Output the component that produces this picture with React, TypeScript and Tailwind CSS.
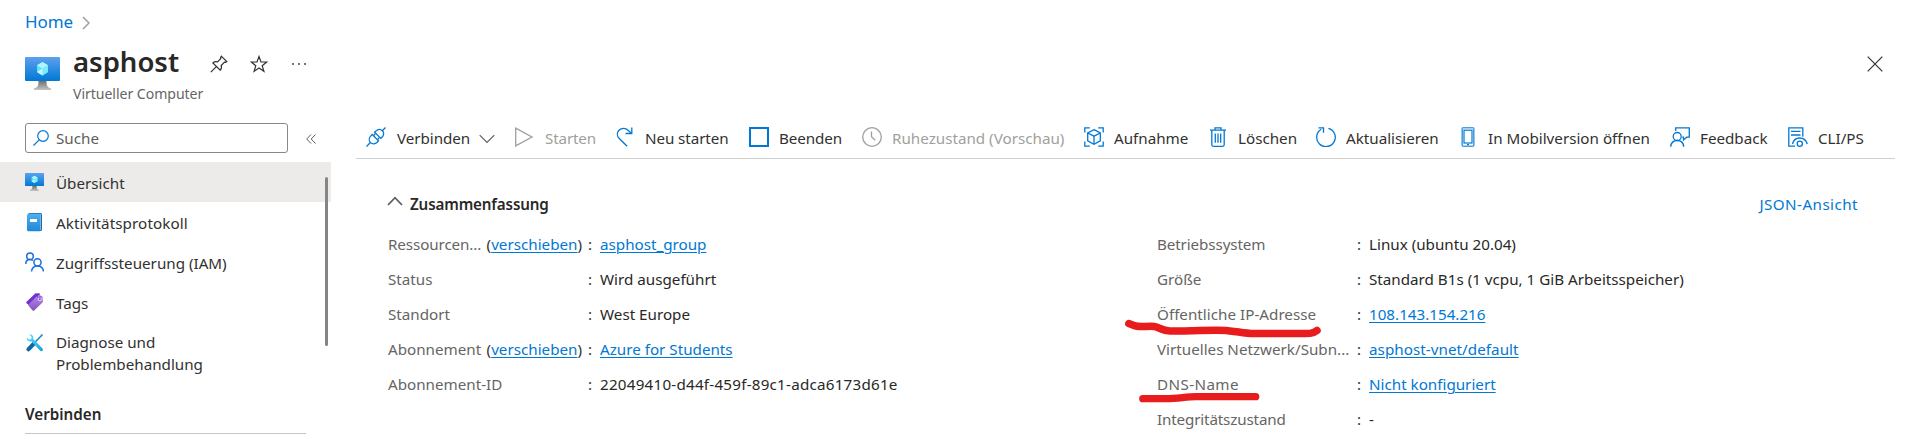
import React from "react";

type IconProps = { className?: string };

function VmIcon({ className }: IconProps) {
  return (
    <svg viewBox="0 0 35 33" className={className} fill="none">
      <defs>
        <linearGradient id="vm-screen" x1="0" y1="0" x2="0" y2="1">
          <stop offset="0" stopColor="#5ea0ef" />
          <stop offset="1" stopColor="#0078d4" />
        </linearGradient>
        <linearGradient id="vm-stand" x1="0" y1="0" x2="0" y2="1">
          <stop offset="0" stopColor="#707070" />
          <stop offset="1" stopColor="#c4c4c4" />
        </linearGradient>
      </defs>
      <path d="M13.5 24h8c0 4.500 .5 6.500 4.500 7.500V33H9v-1.500c4-1 4.500-3 4.500-7.500z" fill="url(#vm-stand)" />
      <rect width="35" height="24" rx="1" fill="url(#vm-screen)" />
      <path d="M17.500 5l5.500 3.300v6.800l-5.500 3.400-5.500-3.400V8.300z" fill="#50e6ff" />
      <path d="M17.500 5l5.500 3.300-5.500 3.300-5.500-3.300z" fill="#b4f4ff" />
      <path d="M17.500 11.600l5.500-3.300v6.800l-5.500 3.400z" fill="#7deaff" />
      <path d="M12 15.100l5.500-3.500v6.900z" fill="#c8f7ff" />
    </svg>
  );
}

function LogIcon() {
  return (
    <svg viewBox="0 0 19 20" className="h-5 w-[19px]">
      <defs>
        <linearGradient id="log-book" x1="0" y1="0" x2="0" y2="1">
          <stop offset="0" stopColor="#4db1ee" />
          <stop offset="1" stopColor="#1f86d8" />
        </linearGradient>
      </defs>
      <path d="M3.500 1h12A1.500 1.500 0 0 1 17 2.500v15a1.500 1.500 0 0 1-1.500 1.500H3.500z" fill="#1b6fb8" />
      <path d="M4 2h11.500v16H4z" fill="#e8f4fc" />
      <path d="M3.500 1.800H15V19.300H3.500A1.500 1.500 0 0 1 2 17.800V3.300a1.500 1.500 0 0 1 1.500-1.500z" fill="url(#log-book)" />
      <rect x="5" y="7" width="7" height="3" fill="#fff" />
    </svg>
  );
}

function PeopleIcon() {
  return (
    <svg viewBox="0 0 19 20" className="h-5 w-[19px]" fill="none" stroke="#1a6fe0" strokeWidth="1.5">
      <circle cx="5" cy="4.200" r="3.300" />
      <path d="M.8 12c0-3 1.700-4.500 4.200-4.500 1.200 0 2.200.4 3 1" />
      <circle cx="12.500" cy="10.300" r="3.600" />
      <path d="M6.500 19.500c.4-3.600 2.700-5.500 6-5.500s5.600 1.900 6 5.500" />
    </svg>
  );
}

function TagIcon() {
  return (
    <svg viewBox="0 0 19 20" className="h-5 w-[19px]">
      <defs>
        <linearGradient id="tag-front" x1="0" y1="0" x2="0" y2="1">
          <stop offset="0" stopColor="#b685e6" />
          <stop offset="1" stopColor="#8655bd" />
        </linearGradient>
      </defs>
      <path d="M10.500 1.200L15 1.500l-9.500 13L1.800 11.500c-.7-.7-.7-1.200 0-1.900z" fill="#7331d1" />
      <path d="M11.500 4.500l5-.6c.7 0 1 .3 1.100 1l.3 4.300c0 .6-.1 1-.6 1.500L9.200 18.500c-.6.500-1 .5-1.600 0L3.700 14c-.5-.6-.5-1.100.1-1.700z" fill="url(#tag-front)" />
      <circle cx="14.800" cy="7.300" r="1.500" fill="#8b55c9" stroke="#f1e3ff" strokeWidth="1" />
      <path d="M13 5.500c-.8-2.500.2-4 1.200-3.300s.8 2.600.8 4.300" fill="none" stroke="#6a27c4" strokeWidth=".9" />
    </svg>
  );
}

function ToolsIcon() {
  return (
    <svg viewBox="0 0 19 20" className="h-5 w-[19px]" fill="none">
      <defs>
        <linearGradient id="wrench" x1="0" y1="0" x2="1" y2="1">
          <stop offset="0" stopColor="#50e6ff" />
          <stop offset="1" stopColor="#1c9fd8" />
        </linearGradient>
      </defs>
      <path d="M16.800 2.200L9.500 9.800" stroke="#1c84c0" strokeWidth="1.500" />
      <path d="M15.500 1.800l1.600-.8.900.9-.9 1.600z" fill="#2a92c9" />
      <path d="M9 10.500l-5.600 5.900" stroke="#0f66ab" strokeWidth="4" strokeLinecap="round" />
      <path d="M4.300 1.600C6.700 1 8.900 3 8.200 6l9.300 9.600c.7.900.5 1.700-.1 2.300s-1.500.6-2.200-.1L6.200 8.300c-2.500.9-4.900-.9-4.400-3.700l2.400 2.100 2-.6.500-1.900z" fill="url(#wrench)" />
    </svg>
  );
}

const BLUE = "#0078d4";
const GREY = "#a19f9d";

function ToolSvg({ children, color = BLUE }: { children: React.ReactNode; color?: string }) {
  return (
    <svg viewBox="0 0 20 20" className="size-5 shrink-0" fill="none" stroke={color} strokeWidth="1.3">
      {children}
    </svg>
  );
}

const tools = [
  {
    label: "Verbinden", width: "w-[148px]", text: "ml-[11px] tracking-[-0.05px]", chevron: true, disabled: false,
    icon: (
      <ToolSvg>
        <path d="M.5 19.500l3.700-3.700M15.800 4.200L19.500.5" />
        <path d="M6.200 7.500l6.300 6.300-1.300 1.400c-2 2-4.800 2.300-6.700.400s-1.600-4.700.4-6.700z" />
        <path d="M8.600 5.200l6.200 6.200 1.200-1.200c2-2 2.200-4.600.4-6.400s-4.500-1.700-6.500.3z" />
        <path d="M7.400 8.700l2-2.100M11.400 12.700l2-2.100" />
      </ToolSvg>
    ),
  },
  {
    label: "Starten", width: "w-[102px]", text: "ml-[11px] tracking-[-0.15px]", disabled: true,
    icon: <ToolSvg color={GREY}><path d="M1.700 1.200v17.600L18 10z" /></ToolSvg>,
  },
  {
    label: "Neu starten", width: "w-[133px]", text: "ml-[9px] tracking-[-0.08px]", disabled: false,
    icon: (
      <ToolSvg>
        <path d="M11.200 19.300L3.200 11.500C.9 9 .7 5.600 3 3.200c2.500-2.500 6.600-2.500 9 0l3.300 3" />
        <path d="M15.800.5v6H9.500" />
      </ToolSvg>
    ),
  },
  {
    label: "Beenden", width: "w-[113px]", text: "ml-2.5 tracking-[-0.1px]", disabled: false,
    icon: <ToolSvg><rect x="1" y="1" width="18" height="18" strokeWidth="2" /></ToolSvg>,
  },
  {
    label: "Ruhezustand (Vorschau)", width: "w-[222px]", text: "ml-2.5", disabled: true,
    icon: <ToolSvg color={GREY}><circle cx="10" cy="10" r="9.300" /><path d="M9.500 4.500v5.200l3.700 3.500" /></ToolSvg>,
  },
  {
    label: "Aufnahme", width: "w-[124px]", text: "ml-2.5", disabled: false,
    icon: (
      <ToolSvg>
        <path d="M.8 5.500V.8h5M14.200.8h5v4.700M19.200 14.500v4.700h-5M5.800 19.200h-5v-4.700" />
        <path d="M10 2.700l6.300 3.300v7.900L10 17.300l-6.300-3.400V6z" />
        <path d="M3.700 6L10 9.200 16.300 6M10 9.200v8" />
      </ToolSvg>
    ),
  },
  {
    label: "Löschen", width: "w-[108px]", text: "ml-2.5", disabled: false,
    icon: (
      <ToolSvg>
        <path d="M2 3.200h16M7 3V.8h6V3M3.800 3.200v14.600c0 1 .5 1.500 1.500 1.500h9.400c1 0 1.500-.5 1.500-1.500V3.200" />
        <path d="M7.300 6.500v9.300M10 6.500v9.300M12.700 6.500v9.300" />
      </ToolSvg>
    ),
  },
  {
    label: "Aktualisieren", width: "w-[142px]", text: "ml-2.5", disabled: false,
    icon: (
      <ToolSvg>
        <path d="M12.400 1.300a9.300 9.300 0 1 1-7.200 1" />
        <path d="M2.500.8h5v5" />
      </ToolSvg>
    ),
  },
  {
    label: "In Mobilversion öffnen", width: "w-[212px]", text: "ml-2.5", disabled: false,
    icon: (
      <ToolSvg>
        <rect x="4.200" y=".8" width="11.600" height="18.400" rx="1" stroke="#4aa0e2" strokeWidth="1.600" />
        <rect x="6" y="3.200" width="8" height="12.800" strokeWidth="1.200" />
        <path d="M9 17.700h2" />
      </ToolSvg>
    ),
  },
  {
    label: "Feedback", width: "w-[118px]", text: "ml-2.5", disabled: false,
    icon: (
      <ToolSvg>
        <circle cx="7.200" cy="9.500" r="4" />
        <path d="M.7 19.700c.3-3.900 2.900-6.200 6.500-6.200s6.200 2.300 6.500 6.200" />
        <path d="M5.700 4V.8h13.600v9.400h-2.500l-3.300 2.700v-2.700h-1.300" />
      </ToolSvg>
    ),
  },
  {
    label: "CLI/PS", width: "w-[76px]", text: "ml-2.5", disabled: false,
    icon: (
      <ToolSvg>
        <path d="M7 19.200H.8V.8h14v9M3 4.300h9.500M3 8h9.500" />
        <path d="M4.500 17c1-4 3.800-6 7.200-6s6.300 2 7.600 6" />
        <circle cx="11.800" cy="16.700" r="2.600" />
      </ToolSvg>
    ),
  },
];

function Toolbar() {
  return (
    <div className="ml-[25px] flex h-[41px] w-[1539px] items-start border-b border-[#d2d0ce] pt-[9px] pl-2.5">
      {tools.map((t) => (
        <button
          key={t.label}
          className={`flex h-5 shrink-0 items-center whitespace-nowrap ${t.width} ${t.disabled ? "text-[#a19f9d]" : "text-[#323130]"}`}
        >
          {t.icon}
          <span className={`pt-0.5 leading-5 ${t.text}`}>{t.label}</span>
          {t.chevron && (
            <svg viewBox="0 0 16 10" className="mt-1 ml-[9px] h-2.5 w-4" fill="none" stroke="#605e5c" strokeWidth="1.200">
              <path d="M.7 1.200L8 8.500l7.300-7.300" />
            </svg>
          )}
        </button>
      ))}
    </div>
  );
}

function Link({ children }: { children: React.ReactNode }) {
  return <a className="text-[#0078d4] underline decoration-1 underline-offset-[2px]">{children}</a>;
}

type Row = { label: string; move?: boolean; value: string; link?: boolean; tracking?: string; labelTracking?: string };

const leftRows: Row[] = [
  { label: "Ressourcen...", move: true, value: "asphost_group", link: true, labelTracking: "tracking-[-0.1px]" },
  { label: "Status", value: "Wird ausgeführt" },
  { label: "Standort", value: "West Europe" },
  { label: "Abonnement", move: true, value: "Azure for Students", link: true },
  { label: "Abonnement-ID", value: "22049410-d44f-459f-89c1-adca6173d61e", tracking: "tracking-[0.23px]" },
];

const rightRows: Row[] = [
  { label: "Betriebssystem", value: "Linux (ubuntu 20.04)", labelTracking: "tracking-[-0.1px]" },
  { label: "Größe", value: "Standard B1s (1 vcpu, 1 GiB Arbeitsspeicher)" },
  { label: "Öffentliche IP-Adresse", value: "108.143.154.216", link: true, labelTracking: "tracking-[0.02px]" },
  { label: "Virtuelles Netzwerk/Subn...", value: "asphost-vnet/default", link: true, tracking: "tracking-[0.05px]" },
  { label: "DNS-Name", value: "Nicht konfiguriert", link: true, labelTracking: "tracking-[0.4px]" },
  { label: "Integritätszustand", value: "-", labelTracking: "tracking-[-0.15px]" },
];

function Properties({ rows }: { rows: Row[] }) {
  return (
    <dl className="flex flex-col gap-[15px]">
      {rows.map((r) => (
        <div key={r.label} className="flex h-5 leading-5 whitespace-nowrap">
          <dt className="flex w-[200px] shrink-0 justify-between text-[#666564]">
            <span className={r.labelTracking ?? ""}>{r.label}</span>
            {r.move && (
              <span className="pr-1.5 text-[#323130]">
                (<Link>verschieben</Link>)
              </span>
            )}
          </dt>
          <span className="w-3 shrink-0 text-[#323130]">:</span>
          <dd className={`text-[#292827] ${r.tracking ?? ""}`}>{r.link ? <Link>{r.value}</Link> : r.value}</dd>
        </div>
      ))}
    </dl>
  );
}

const nav = [
  { label: "Übersicht", icon: <VmIcon className="h-[18px] w-[19px]" />, active: true, tracking: "" },
  { label: "Aktivitätsprotokoll", icon: <LogIcon />, active: false, tracking: "tracking-[0.1px]" },
  { label: "Zugriffssteuerung (IAM)", icon: <PeopleIcon />, active: false, tracking: "" },
  { label: "Tags", icon: <TagIcon />, active: false, tracking: "" },
];

function Sidebar() {
  return (
    <aside className="w-[331px] shrink-0">
      <div className="flex h-[39px] items-start pl-[25px]">
        <div className="flex h-[30px] w-[263px] items-center rounded-[3px] border border-[#8a8886] pl-[7px]">
          <svg viewBox="0 0 16 16" className="size-4" fill="none" stroke={BLUE} strokeWidth="1.200">
            <circle cx="10" cy="6" r="5.300" />
            <path d="M6.200 9.800L.5 15.500" />
          </svg>
          <span className="pl-[7px] leading-5 text-[#605e5c]">Suche</span>
        </div>
        <svg viewBox="0 0 10 10" className="mt-[11px] ml-[18px] size-2.5" fill="none" stroke="#605e5c" strokeWidth="1">
          <path d="M5 .5L.7 5 5 9.500M9.500.5L5.200 5l4.300 4.500" />
        </svg>
      </div>
      <div className="flex">
        <nav className="w-[331px] shrink-0">
          {nav.map((n) => (
            <div key={n.label} className={`flex h-10 items-center pl-[25px] ${n.active ? "bg-[#edebe9]" : ""}`}>
              {n.icon}
              <span className={`pt-0.5 pl-3 leading-5 text-[#323130] ${n.tracking}`}>{n.label}</span>
            </div>
          ))}
          <div className="flex pt-[11px] pl-[25px]">
            <ToolsIcon />
            <span className="-mt-0.5 pl-3 leading-[22px] text-[#323130]">
              Diagnose und
              <br />
              Problembehandlung
            </span>
          </div>
          <div className="mt-[29px] ml-[25px] h-[30px] w-[281px] border-b border-[#c8c6c4] leading-5 font-semibold text-[#292827]">
            Verbinden
          </div>
        </nav>
        <div className="mt-[15px] -ml-1.5 h-[169px] w-[3px] shrink-0 rounded-full bg-[#858585]" />
      </div>
    </aside>
  );
}

export default function App() {
  return (
    <div className="relative h-[436px] w-[1908px] overflow-hidden bg-white font-['Noto_Sans','Open_Sans',sans-serif] text-[15.2px] text-[#323130]">
      <div className="flex h-11 items-center gap-[9px] pl-[25px] text-[17px]">
        <a className="-mt-px leading-6 tracking-[-0.1px] text-[#0078d4]">Home</a>
        <svg viewBox="0 0 8 14" className="mt-0.5 h-3.5 w-2" fill="none" stroke="#a19f9d" strokeWidth="1.500">
          <path d="M1 1l6 6-6 6" />
        </svg>
      </div>

      <header className="flex h-[79px] items-start pl-[25px]">
        <VmIcon className="mt-[13px] h-[33px] w-[35px]" />
        <div className="ml-[13px]">
          <div className="flex h-[40px] items-start">
            <h1 className="-mt-px w-[137px] text-[27.500px] leading-[38px] font-semibold text-[#292827]">asphost</h1>
            <svg viewBox="0 0 18 18" className="mt-[11px] size-[18px]" fill="none" stroke="#323130" strokeWidth="1.200">
              <path d="M.8 17.200l5.300-5.300M11.300 1.200l5.500 5.500-1.300.700-1-.2-3.300 3.300c.6 2 .2 3.600-1 4.700L2.900 7.900c1.200-1.200 2.700-1.600 4.700-1l3.200-3.400-.2-1z" />
            </svg>
            <svg viewBox="0 0 18 18" className="mt-[11px] ml-[22px] size-[18px]" fill="none" stroke="#323130" strokeWidth="1.200">
              <path d="M9 1.500l2 5.500h5.700l-4.500 3.700 1.700 5.600L9 13l-4.900 3.300 1.700-5.600L1.300 7H7z" />
            </svg>
            <svg viewBox="0 0 14 2" className="mt-[19px] ml-[24px] h-0.5 w-3.5" fill="#323130">
              <circle cx="1" cy="1" r=".9" />
              <circle cx="7" cy="1" r=".9" />
              <circle cx="13" cy="1" r=".9" />
            </svg>
          </div>
          <div className="text-[14.100px] leading-5 tracking-[-0.05px] text-[#666564]">Virtueller Computer</div>
        </div>
        <svg viewBox="0 0 16 16" className="mt-3 mr-[25px] ml-auto size-4" fill="none" stroke="#323130" strokeWidth="1.200">
          <path d="M.7.7l14.600 14.600M15.300.7L.7 15.300" />
        </svg>
      </header>

      <div className="flex">
        <Sidebar />
        <main className="-mt-[5px] flex-1">
          <Toolbar />
          <section className="pl-14">
            <div className="flex h-[75px] items-start pt-[35px]">
              <svg viewBox="0 0 16 10" className="mt-[2px] h-2.5 w-4" fill="none" stroke="#605e5c" strokeWidth="1.800">
                <path d="M1 9l7-7.300L15 9" />
              </svg>
              <h2 className="pl-[7px] leading-5 font-semibold tracking-[-0.15px] text-[#292827]">Zusammenfassung</h2>
              <a className="mr-[50px] ml-auto leading-5 tracking-[0.45px] text-[#0078d4]">JSON-Ansicht</a>
            </div>
            <div className="flex pl-px">
              <div className="w-[769px] shrink-0">
                <Properties rows={leftRows} />
              </div>
              <Properties rows={rightRows} />
            </div>
          </section>
        </main>
      </div>

      <svg viewBox="0 0 220 104" className="pointer-events-none absolute top-[300px] left-[1120px] h-[104px] w-[220px]" fill="none" stroke="#e81c1c" strokeLinecap="round" strokeLinejoin="round">
        <path d="M8.800 23.500L14 25.500C19 27.800 27 25.800 34 26.400C40 27.500 42 30.900 50 31C66 31 92 29.800 106 30.400C118 31.500 124 33.500 134 33.600H182C190 33.500 193 33.500 197 30.500" strokeWidth="7.500" />
        <path d="M22.800 98.700H46C58 98.700 66 96.700 76 96.700H135.700" strokeWidth="7.300" />
      </svg>
    </div>
  );
}
